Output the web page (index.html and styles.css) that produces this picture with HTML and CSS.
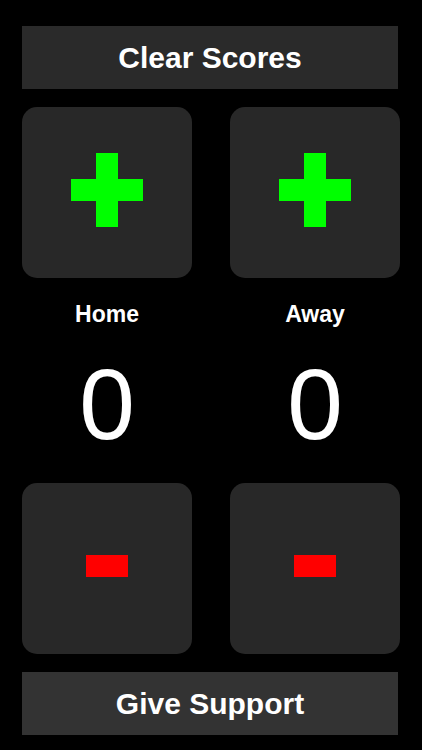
FILE: index.html
```html
<!DOCTYPE html>
<html>
<head>
<meta charset="utf-8">
<link rel="stylesheet" href="styles.css">
</head>
<body>
<div class="app">
  <div class="bar bar-top">Clear Scores</div>
  <div class="teams">
    <div class="team">
      <div class="pad pad-plus">
        <svg width="72" height="74" viewBox="0 0 72 74"><rect x="25" y="0" width="22" height="74" fill="#00ff00"/><rect x="0" y="26" width="72" height="22" fill="#00ff00"/></svg>
      </div>
      <div class="label">Home</div>
      <div class="score">0</div>
      <div class="pad pad-minus">
        <svg width="42" height="22" viewBox="0 0 42 22"><rect x="0" y="0" width="42" height="22" fill="#ff0000"/></svg>
      </div>
    </div>
    <div class="team">
      <div class="pad pad-plus">
        <svg width="72" height="74" viewBox="0 0 72 74"><rect x="25" y="0" width="22" height="74" fill="#00ff00"/><rect x="0" y="26" width="72" height="22" fill="#00ff00"/></svg>
      </div>
      <div class="label">Away</div>
      <div class="score">0</div>
      <div class="pad pad-minus">
        <svg width="42" height="22" viewBox="0 0 42 22"><rect x="0" y="0" width="42" height="22" fill="#ff0000"/></svg>
      </div>
    </div>
  </div>
  <div class="bar bar-bottom">Give Support</div>
</div>
</body>
</html>
```

FILE: styles.css
```css
html, body {
  margin: 0;
  padding: 0;
  background: #000;
}
body {
  width: 422px;
  height: 750px;
  overflow: hidden;
  font-family: "Liberation Sans", Arial, sans-serif;
  color: #fff;
}
.app {
  padding: 26px 22px 0 22px;
  display: flex;
  flex-direction: column;
}
.bar {
  width: 376px;
  height: 63px;
  display: flex;
  align-items: center;
  justify-content: center;
  font-size: 30px;
  font-weight: bold;
}
.bar-top {
  background: #2a2a2a;
}
.bar-bottom {
  background: #333333;
  margin-top: 18px;
}
.teams {
  display: grid;
  grid-template-columns: 170px 170px;
  column-gap: 38px;
  margin-top: 18px;
}
.team {
  display: flex;
  flex-direction: column;
  align-items: center;
}
.pad {
  width: 170px;
  height: 171px;
  box-sizing: border-box;
  background: #282828;
  border-radius: 15px;
  display: flex;
  align-items: center;
  justify-content: center;
  padding-bottom: 5px;
}
.pad svg {
  display: block;
}
.label {
  margin-top: 23px;
  font-size: 23px;
  line-height: 26px;
  font-weight: bold;
}
.score {
  margin-top: 27px;
  font-size: 100px;
  line-height: 100px;
  font-weight: normal;
}
.pad-minus {
  margin-top: 29px;
}
```
